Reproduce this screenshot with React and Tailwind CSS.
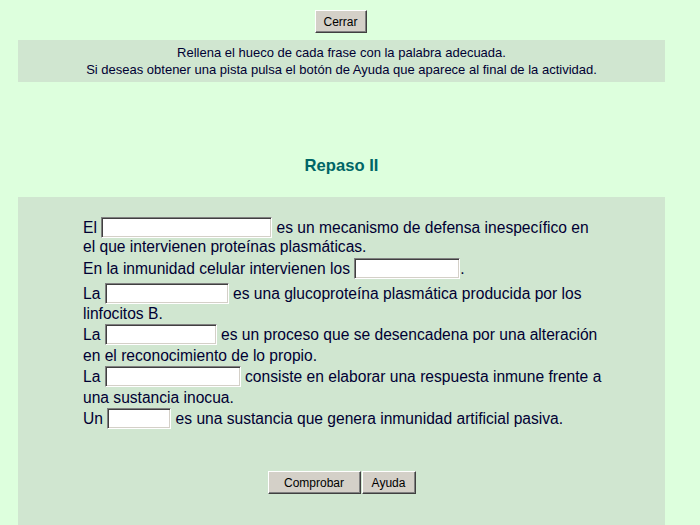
import React from 'react';

const font = { fontFamily: '"Liberation Sans", Arial, sans-serif' };

function Blank({ w }) {
  return (
    <input
      type="text"
      className={`inline-block h-[21px] align-middle -mt-[3px] bg-white border border-t-[#808080] border-l-[#808080] border-b-white border-r-white shadow-[inset_1px_1px_0_#404040,inset_-1px_-1px_0_#d4d0c8] outline-none ${w}`}
    />
  );
}

function Btn({ children, className = '' }) {
  return (
    <button
      type="button"
      className={`h-[23px] bg-[#d4d0c8] text-[12px] text-black border border-t-white border-l-white border-b-[#404040] border-r-[#404040] shadow-[inset_-1px_-1px_0_#808080] ${className}`}
    >
      {children}
    </button>
  );
}

function Line({ children, className = '' }) {
  return <div className={`h-[21px] ${className}`}>{children}</div>;
}

export default function App() {
  return (
    <div style={font} className="w-[700px] h-[525px] overflow-hidden bg-[#ddffdd] text-[#000033]">
      {/* Cerrar */}
      <div className="pt-[10px] flex justify-center">
        <Btn className="w-[52px] ml-[-19px]">Cerrar</Btn>
      </div>

      {/* Instrucciones */}
      <div className="mt-[7px] ml-[18px] w-[647px] h-[42px] bg-[#d0e6d0] pt-[4px] text-center text-[13px] leading-[17px]">
        <p>Rellena el hueco de cada frase con la palabra adecuada.</p>
        <p>Si deseas obtener una pista pulsa el botón de Ayuda que aparece al final de la actividad.</p>
      </div>

      {/* Titulo */}
      <div className="h-[115px] w-[683px] flex items-center justify-center pt-[52px]">
        <h1 className="text-[16.6px] font-bold text-[#006666] leading-[20px]">Repaso II</h1>
      </div>

      {/* Actividad */}
      <div className="ml-[18px] w-[647px] h-[340px] bg-[#d0e6d0] pt-[20px]">
        <div className="mx-auto w-[517px] whitespace-nowrap text-[15.6px] leading-[21px]">
          <Line>El <Blank w="w-[171px]" /> es un mecanismo de defensa inespecífico en</Line>
          <Line className="-mt-[2px]">el que intervienen proteínas plasmáticas.</Line>
          <Line className="mt-[1px]">En la inmunidad celular intervienen los <Blank w="w-[106px]" />.</Line>
          <Line className="mt-[4px]">La <Blank w="w-[124px]" /> es una glucoproteína plasmática producida por los</Line>
          <Line className="-mt-[1px]">linfocitos B.</Line>
          <Line>La <Blank w="w-[112px]" /> es un proceso que se desencadena por una alteración</Line>
          <Line>en el reconocimiento de lo propio.</Line>
          <Line>La <Blank w="w-[136px]" /> consiste en elaborar una respuesta inmune frente a</Line>
          <Line>una sustancia inocua.</Line>
          <Line>Un <Blank w="w-[64px]" /> es una sustancia que genera inmunidad artificial pasiva.</Line>
        </div>

        <div className="mt-[42px] flex justify-center gap-[1px]">
          <Btn className="w-[93px]">Comprobar</Btn>
          <Btn className="w-[54px]">Ayuda</Btn>
        </div>
      </div>
    </div>
  );
}
